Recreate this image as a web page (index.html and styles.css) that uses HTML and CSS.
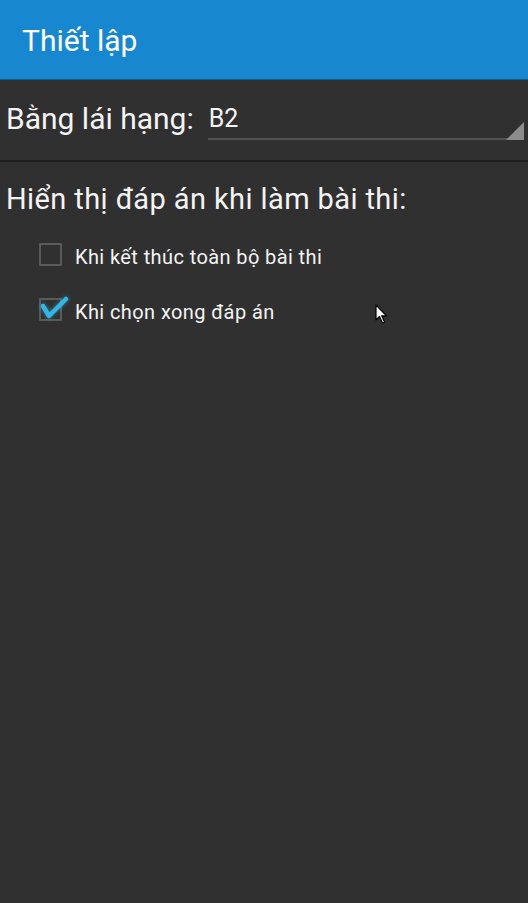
FILE: index.html
```html
<!DOCTYPE html>
<html lang="vi">
<head>
<meta charset="utf-8">
<link rel="stylesheet" href="styles.css">
</head>
<body>
<header class="appbar"><h1 class="title">Thiết lập</h1></header>
<section class="license-row">
  <span class="label">Bằng lái hạng:</span>
  <div class="spinner">
    <span class="spinner-value">B2</span>
    <span class="spinner-arrow"></span>
  </div>
</section>
<div class="divider"></div>
<section class="options">
  <h2 class="heading">Hiển thị đáp án khi làm bài thi:</h2>
  <label class="check">
    <span class="box"></span>
    <span class="check-text">Khi kết thúc toàn bộ bài thi</span>
  </label>
  <label class="check">
    <span class="box checked">
      <svg class="tick" viewBox="0 0 28 24" width="28" height="24"><path d="M2 10 L8 20 L25 3" fill="none" stroke="#33b5e5" stroke-width="4.5" stroke-linecap="round" stroke-linejoin="round"/></svg>
    </span>
    <span class="check-text">Khi chọn xong đáp án</span>
  </label>
</section>
<svg class="cursor" width="14" height="20" viewBox="0 0 14 20"><path d="M1 1 L1 16 L4.5 12.5 L7.5 19 L9.5 18 L6.7 11.8 L11.5 11.8 Z" fill="#ffffff" stroke="#000000" stroke-width="1.2" stroke-linejoin="round"/></svg>
</body>
</html>
```
FILE: styles.css
```css
html, body {
  margin: 0;
  padding: 0;
  background: #303030;
  font-family: Roboto, "Noto Sans", sans-serif;
  color: #ffffff;
}
body {
  position: relative;
  width: 528px;
  height: 903px;
  overflow: hidden;
}
.appbar {
  height: 79px;
  background: #1787cf;
  border-bottom: 1px solid #0e5a8c;
  display: flex;
  align-items: center;
  padding-left: 22px;
}
.title {
  margin: 0;
  font-weight: 400;
  font-size: 30px;
  color: #ffffff;
  padding-top: 2px;
}
.license-row {
  height: 80px;
  display: flex;
  align-items: flex-end;
  padding: 0 4px 20px 6px;
  box-sizing: border-box;
}
.label {
  font-size: 30px;
  line-height: 35px;
  color: #f4f4f4;
  margin-right: 14px;
  margin-bottom: 4px;
}
.spinner {
  flex: 1;
  position: relative;
  display: flex;
  align-items: flex-end;
  height: 40px;
  border-bottom: 2px solid #505050;
  padding-left: 1px;
  margin-right: 0;
}
.spinner-value {
  font-size: 25px;
  line-height: 30px;
  color: #f4f4f4;
  margin-bottom: 4px;
}
.spinner-arrow {
  position: absolute;
  right: 0;
  bottom: -2px;
  width: 0;
  height: 0;
  border-left: 18px solid transparent;
  border-bottom: 18px solid #8c8c8c;
}
.divider {
  height: 2px;
  background: #1f1f1f;
}
.options {
  padding: 20px 0 0 6px;
}
.heading {
  margin: 0 0 11px 0;
  font-weight: 400;
  font-size: 29px;
  line-height: 34px;
  letter-spacing: 0.4px;
  color: #f4f4f4;
}
.check {
  display: flex;
  align-items: center;
  height: 55px;
  margin-left: 33px;
}
.box {
  width: 19px;
  height: 19px;
  border: 2px solid #5a5a5a;
  border-radius: 1px;
  position: relative;
  flex: none;
}
.tick {
  position: absolute;
  left: 0;
  top: -4px;
  filter: drop-shadow(0 0 2px rgba(51,181,229,0.6));
}
.check-text {
  margin-left: 13px;
  margin-top: 4px;
  font-size: 20px;
  letter-spacing: 0.4px;
  color: #f4f4f4;
}
.cursor {
  position: absolute;
  left: 375px;
  top: 304px;
}
```
